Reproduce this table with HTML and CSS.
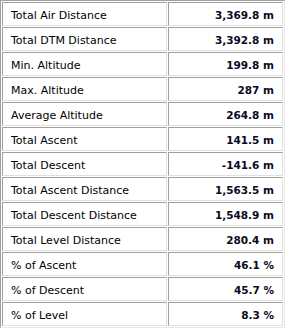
FILE: index.html
```html
<!DOCTYPE html>
<html lang="en">
<head>
<meta charset="UTF-8" />
<title>Track Statistics</title>
<link rel="stylesheet" href="styles.css">
</head>
<body>

<table class="stats">
  <tbody>
    <tr><td class="label">Total Air Distance</td><td class="value">3,369.8 m</td></tr>
    <tr><td class="label">Total DTM Distance</td><td class="value">3,392.8 m</td></tr>
    <tr><td class="label">Min. Altitude</td><td class="value">199.8 m</td></tr>
    <tr><td class="label">Max. Altitude</td><td class="value">287 m</td></tr>
    <tr><td class="label">Average Altitude</td><td class="value">264.8 m</td></tr>
    <tr><td class="label">Total Ascent</td><td class="value">141.5 m</td></tr>
    <tr><td class="label">Total Descent</td><td class="value">-141.6 m</td></tr>
    <tr><td class="label">Total Ascent Distance</td><td class="value">1,563.5 m</td></tr>
    <tr><td class="label">Total Descent Distance</td><td class="value">1,548.9 m</td></tr>
    <tr><td class="label">Total Level Distance</td><td class="value">280.4 m</td></tr>
    <tr><td class="label">% of Ascent</td><td class="value">46.1 %</td></tr>
    <tr><td class="label">% of Descent</td><td class="value">45.7 %</td></tr>
    <tr><td class="label">% of Level</td><td class="value">8.3 %</td></tr>
  </tbody>
</table>

</body>
</html>
```

FILE: styles.css
```css
body {
  margin: 0;
  background: #fff;
  font-family: "DejaVu Sans", Verdana, sans-serif;
  font-size: 11px;
  color: #000;
}
.stats {
  width: 285px;
  border-collapse: separate;
  border-spacing: 1px;
  border: 1px solid #a0a0a0;
  border-right-color: #e8e8e8;
  border-bottom-color: #e8e8e8;
  margin: 0 0 2px;
}
.stats td {
  height: 24px;
  padding: 2px 8px 0;
  box-sizing: border-box;
  border: 1px solid #e0e0e0;
  border-top-color: #a0a0a0;
  border-left-color: #a0a0a0;
}
.stats td.label {
  width: 165px;
}
.stats td.value {
  text-align: right;
  font-weight: bold;
  font-size: 10.5px;
  color: #0a0a1e;
}
```
